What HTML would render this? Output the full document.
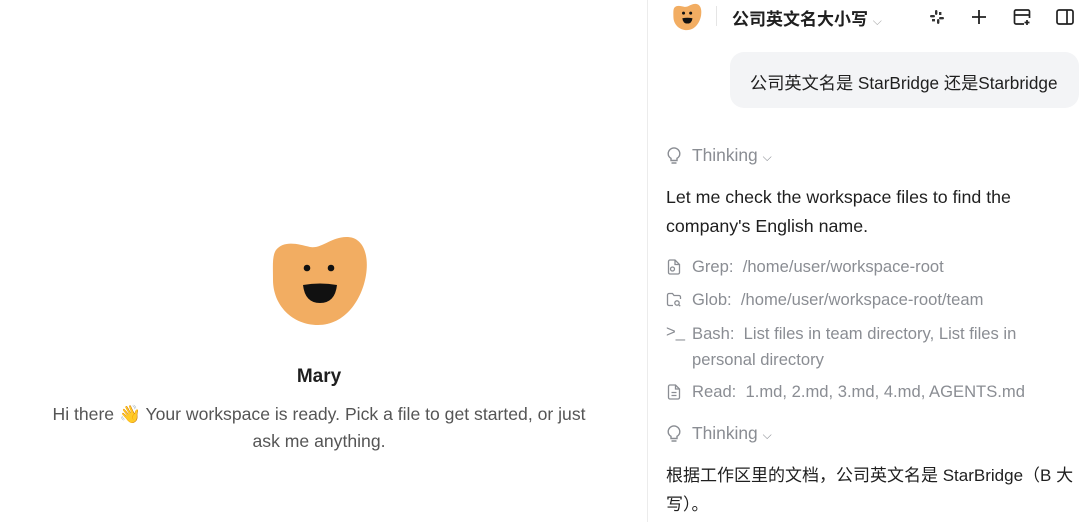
<!DOCTYPE html>
<html><head><meta charset="utf-8"><style>
*{margin:0;padding:0;box-sizing:border-box}
body{width:1080px;height:522px;overflow:hidden;background:#fff;font-family:"Liberation Sans","Noto Sans CJK SC",sans-serif;position:relative;color:#1f1f1f}
.abs{position:absolute;white-space:nowrap}
.div{position:absolute;left:647px;top:0;width:1px;height:522px;background:#ececec}
.g{color:#8a8d93;font-size:16.6px}
.t{font-size:17.8px;color:#1f1f1f}
svg{position:absolute}
</style></head><body>
<div class="div"></div>

<svg style="left:270px;top:234px" width="100" height="94" viewBox="270 234 100 94">
<path d="M276 250 C284 240 298 244 310 247 C322 249 332 236 348 237 C364 238 369 256 366 275 C362 300 345 325 318 325 C292 325 273 305 273 280 C273 266 272 256 276 250Z" fill="#f2ad62"/>
<circle cx="307" cy="268" r="3.3" fill="#111"/><circle cx="331" cy="268" r="3.3" fill="#111"/>
<path d="M303 285 Q320 282 337 285 Q335 303 320 303 Q305 303 303 285Z" fill="#111"/>
</svg>
<div class="abs" style="left:0;width:638px;text-align:center;top:366px;font-size:19px;font-weight:bold">Mary</div>
<div class="abs" style="left:0;width:638px;text-align:center;top:401px;font-size:17.6px;color:#555;line-height:27px;white-space:normal">Hi there 👋 Your workspace is ready. Pick a file to get started, or just<br>ask me anything.</div>

<svg style="left:673px;top:3px" width="30" height="28" viewBox="272 234 100 94"><path d="M276 250 C284 240 298 244 310 247 C322 249 332 236 348 237 C364 238 369 256 366 275 C362 300 345 325 318 325 C292 325 273 305 273 280 C273 266 272 256 276 250Z" fill="#f2ad62"/><circle cx="307" cy="268" r="5" fill="#111"/><circle cx="331" cy="268" r="5" fill="#111"/><path d="M303 285 Q320 282 337 285 Q335 303 320 303 Q305 303 303 285Z" fill="#111"/></svg>
<div style="position:absolute;left:716px;top:6px;width:1px;height:20px;background:#e5e5e5"></div>
<div class="abs" style="left:732px;top:5px;font-size:17px;font-weight:bold">公司英文名大小写 <span style="color:#aaa;font-weight:normal;font-size:12px">⌵</span></div>
<svg style="left:928px;top:8px" width="18" height="18" viewBox="0 0 18 18" fill="#333"><rect x="2" y="7" width="5" height="2.4" rx="1.2"/><rect x="7" y="2" width="2.4" height="5" rx="1.2"/><rect x="11" y="9" width="5" height="2.4" rx="1.2"/><rect x="9" y="11" width="2.4" height="5" rx="1.2"/><rect x="11" y="4" width="2.4" height="3" /><rect x="4" y="11" width="3" height="2.4"/></svg>
<svg style="left:970px;top:8px" width="18" height="18" viewBox="0 0 18 18" stroke="#222" stroke-width="1.8" fill="none"><path d="M9 2v14M2 9h14"/></svg>
<svg style="left:1012px;top:7px" width="20" height="20" viewBox="0 0 20 20" stroke="#222" stroke-width="1.7" fill="none"><path d="M12 17H4a1.5 1.5 0 0 1-1.5-1.5v-11A1.5 1.5 0 0 1 4 3h12a1.5 1.5 0 0 1 1.5 1.5V11M2.5 8h15M15 13v5M12.5 15.5h5"/></svg>
<svg style="left:1055px;top:7px" width="20" height="20" viewBox="0 0 20 20" stroke="#222" stroke-width="1.7" fill="none"><rect x="2" y="3" width="16" height="14" rx="2"/><path d="M12 3v14"/></svg>

<div style="position:absolute;left:730px;top:52px;width:349px;height:56px;background:#f3f4f6;border-radius:14px"></div>
<div class="abs t" style="left:750px;top:69px;font-size:17.2px">公司英文名是 StarBridge 还是Starbridge</div>

<svg style="left:666px;top:147px" width="16" height="18" viewBox="0 0 16 18" stroke="#8a8d93" stroke-width="1.4" fill="none"><path d="M5 13.5v-2.2C3.3 10.3 2.2 8.6 2.2 6.7a5.8 5.8 0 0 1 11.6 0c0 1.9-1.1 3.6-2.8 4.6v2.2zM5.5 16h5"/></svg>
<div class="abs g" style="left:692px;top:145px;font-size:17.4px">Thinking <span style="font-size:12px">⌵</span></div>
<div class="abs t" style="left:666px;top:183px;line-height:29px">Let me check the workspace files to find the<br>company's English name.</div>

<svg style="left:666px;top:258px" width="16" height="18" viewBox="0 0 16 18" stroke="#8a8d93" stroke-width="1.3" fill="none"><path d="M9 2H4a1.5 1.5 0 0 0-1.5 1.5v11A1.5 1.5 0 0 0 4 16h8a1.5 1.5 0 0 0 1.5-1.5V6.5zM9 2v4.5h4.5"/><circle cx="6.5" cy="11" r="2"/></svg>
<div class="abs g" style="left:692px;top:257px">Grep:&nbsp; /home/user/workspace-root</div>
<svg style="left:666px;top:291px" width="16" height="18" viewBox="0 0 16 18" stroke="#8a8d93" stroke-width="1.3" fill="none"><path d="M7 14.5H3a1.5 1.5 0 0 1-1.5-1.5V4A1.5 1.5 0 0 1 3 2.5h3.5l1.5 2h5A1.5 1.5 0 0 1 14.5 6v2"/><circle cx="11" cy="12" r="2.2"/><path d="M12.6 13.6l1.6 1.6"/></svg>
<div class="abs g" style="left:692px;top:290px">Glob:&nbsp; /home/user/workspace-root/team</div>
<div class="abs g" style="left:666px;top:322px;color:#8a8d93">&gt;_</div>
<div class="abs g" style="left:692px;top:321px;line-height:26px">Bash:&nbsp; List files in team directory, List files in<br>personal directory</div>
<svg style="left:666px;top:383px" width="16" height="18" viewBox="0 0 16 18" stroke="#8a8d93" stroke-width="1.3" fill="none"><path d="M9.5 2H4a1.5 1.5 0 0 0-1.5 1.5v11A1.5 1.5 0 0 0 4 16h8a1.5 1.5 0 0 0 1.5-1.5V6zM9.5 2v4h4M5.5 9.5h5M5.5 12.5h5"/></svg>
<div class="abs g" style="left:692px;top:382px">Read:&nbsp; 1.md, 2.md, 3.md, 4.md, AGENTS.md</div>

<svg style="left:666px;top:425px" width="16" height="18" viewBox="0 0 16 18" stroke="#8a8d93" stroke-width="1.4" fill="none"><path d="M5 13.5v-2.2C3.3 10.3 2.2 8.6 2.2 6.7a5.8 5.8 0 0 1 11.6 0c0 1.9-1.1 3.6-2.8 4.6v2.2zM5.5 16h5"/></svg>
<div class="abs g" style="left:692px;top:423px;font-size:17.4px">Thinking <span style="font-size:12px">⌵</span></div>
<div class="abs t" style="left:666px;top:461px;line-height:29px;font-size:17px">根据工作区里的文档，公司英文名是 StarBridge（B 大<br>写）。</div>
</body></html>
